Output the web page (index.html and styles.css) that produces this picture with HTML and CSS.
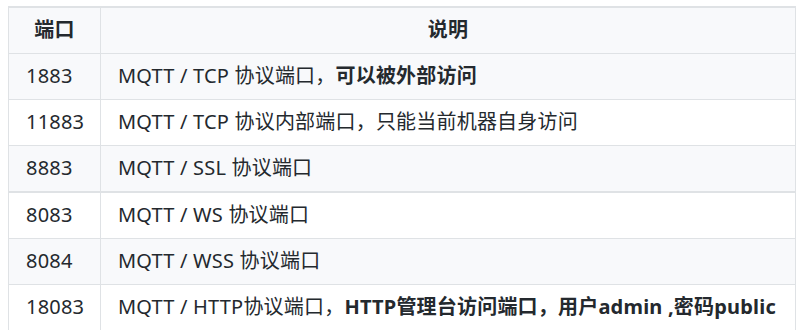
FILE: index.html
```html
<!DOCTYPE html>
<html lang="zh-CN">
<head>
<meta charset="utf-8">
<link rel="stylesheet" href="styles.css">
</head>
<body>
<table class="ports">
  <colgroup><col class="col1"><col></colgroup>
  <thead>
    <tr><th>端口</th><th>说明</th></tr>
  </thead>
  <tbody>
    <tr class="alt"><td>1883</td><td>MQTT / TCP 协议端口，<strong>可以被外部访问</strong></td></tr>
    <tr><td>11883</td><td>MQTT / TCP 协议内部端口，只能当前机器自身访问</td></tr>
    <tr class="alt"><td>8883</td><td>MQTT / SSL 协议端口</td></tr>
    <tr class="split"><td>8083</td><td>MQTT / WS 协议端口</td></tr>
    <tr class="alt"><td>8084</td><td>MQTT / WSS 协议端口</td></tr>
    <tr><td>18083</td><td>MQTT / HTTP协议端口，<strong>HTTP管理台访问端口，用户admin ,密码public</strong></td></tr>
  </tbody>
</table>
</body>
</html>
```
FILE: styles.css
```css
html, body {
  background: #ffffff;
}
body {
  margin: 6px 0 0 8px;
  font-family: "Noto Sans", "Noto Sans CJK SC", sans-serif;
  font-size: 20px;
  letter-spacing: 0.2px;
  color: #24292e;
}
.ports {
  border-collapse: collapse;
  width: 788px;
  table-layout: fixed;
  border-top: 2px solid #dfe2e5;
}
.ports .col1 {
  width: 92px;
}
.ports th,
.ports td {
  border: 1px solid #dfe2e5;
  padding: 7px 0 8px 17px;
  line-height: 30px;
  height: 30px;
  text-align: left;
  white-space: nowrap;
  overflow: hidden;
}
.ports th {
  text-align: center;
  font-weight: 700;
  background: #f8f9fb;
  padding-left: 0;
}
.ports tr.alt td {
  background: #f8f9fb;
}
.ports tr.split td {
  border-top: 2px solid #dfe2e5;
}
strong {
  font-weight: 700;
}
```
